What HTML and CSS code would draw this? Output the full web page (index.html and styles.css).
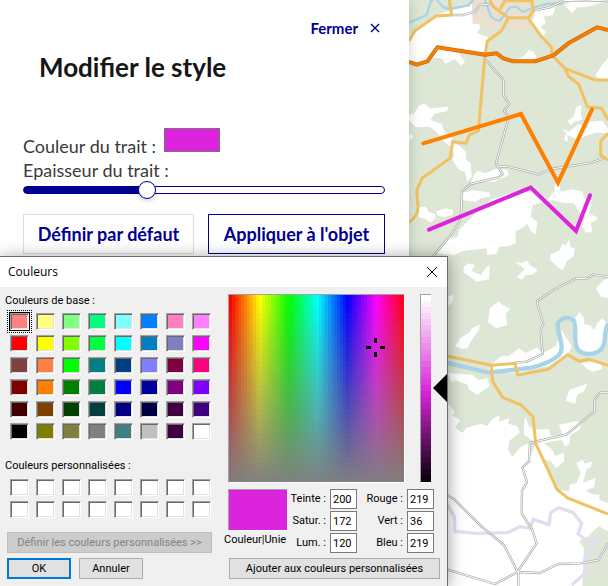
FILE: index.html
```html
<!DOCTYPE html>
<html lang="fr">
<head>
<meta charset="utf-8">
<title>Modifier le style</title>
<link rel="stylesheet" href="styles.css">
</head>
<body>
<main class="app">
  <section class="panel">
    <button class="close-link" type="button">Fermer
      <svg class="close-icon" viewBox="0 0 10 10" aria-hidden="true"><path d="M1 1L9 9M9 1L1 9"/></svg>
    </button>
    <h1 class="title">Modifier le style</h1>
    <div class="field">
      <label for="stroke-color">Couleur du trait :</label>
      <input class="color-box" id="stroke-color" type="color" value="#db24db">
    </div>
    <label class="range-label" for="stroke-width">Epaisseur du trait :</label>
    <input class="range" id="stroke-width" type="range" min="0" max="30" value="10">
    <div class="actions">
      <button class="action action-default" type="button">Définir par défaut</button>
      <button class="action action-apply" type="button">Appliquer à l'objet</button>
    </div>
  </section>

  <section class="map" aria-label="Carte">
    <svg class="map-drawing" viewBox="27 0 597 1758" preserveAspectRatio="xMinYMin slice">
      <rect class="forest" x="27" width="597" height="1758"/>
      <g class="clearing" transform="translate(27 0)">
        <path d="M0 108L20 88 82 46 125 30 188 12 223 40 198 62 215 78 205 100 237 112 231 158 173 150 85 142 57 182 23 195 0 188Z"/>
        <path d="M85 145L150 160 168 185 155 198 140 178 125 182 110 192 98 175 60 172Z"/>
        <path d="M355 60L375 35 440 18 432 45 405 50 410 70 395 80 410 95 405 108 395 105 385 85Z"/>
        <path d="M465 15L485 5 597 3 570 10 530 22 505 22 490 40 478 28Z"/>
        <path d="M323 178L345 168 360 150 374 155 382 170 375 185Z"/>
        <path d="M597 175L581 192 560 225 567 234 597 238Z"/>
        <path d="M0 345L15 340 30 318 45 310 64 325 118 320 115 333 75 342 65 360 98 372 108 400 125 405 130 425 155 440 170 455 172 480 185 490 188 530 175 545 168 515 150 510 130 480 136 465 125 440 100 420 85 398 62 380 20 382 0 360Z"/>
        <path d="M0 408L8 402 13 412 0 420Z"/>
        <path d="M503 320L518 316 515 345 522 358 495 365 485 376 475 362 493 350Z"/>
        <path d="M457 385L480 395 510 372 535 385 540 365 580 362 597 385 597 400 560 398 530 408 510 420 475 405 478 425 465 420 472 400Z"/>
        <path d="M195 525L205 512 230 520 265 505 295 510 300 525 255 545 215 545 185 550Z"/>
        <path d="M160 580L190 570 240 577 245 590 215 595 200 606 160 600Z"/>
        <path d="M245 600L300 580 365 565 400 596 415 600 435 575 440 550 452 555 455 575 490 568 520 575 525 595 548 600 545 620 540 640 568 655 545 670 550 695 530 698 520 680 528 650 510 635 495 610 460 608 430 600 370 615 365 650 385 665 380 704 365 692 355 672 330 690 320 690 320 730 300 738 270 740 262 762 235 765 232 745 165 752 135 765 80 760 108 732 120 715 145 712 150 690 200 640Z"/>
        <path d="M30 622L50 620 60 636 78 642 80 655 65 668 45 655 28 652Z"/>
        <path d="M82 634L112 625 132 630 130 645 105 652 84 646Z"/>
        <path d="M480 717L485 742 498 745 494 768 472 785 462 810 448 803 424 780 425 762 450 752 460 732 472 735Z"/>
        <path d="M318 785L335 789 355 782 362 795 386 810 370 824 350 825 338 840 323 830 348 808Z"/>
        <path d="M178 790L198 795 188 812 215 825 232 802 242 795 240 838 203 845 163 815 165 800Z"/>
        <path d="M585 840L597 835 597 895 575 890 560 865Z"/>
      </g>
      <g class="clearing" transform="translate(27 879)">
        <path d="M118 10L134 5 130 28 117 38Z"/>
        <path d="M270 25L278 33 304 48 290 62 295 95 262 106 237 88 243 45Z"/>
        <path d="M212 95L210 112 188 140 176 165 160 168 138 160 155 135 182 118 190 105Z"/>
        <path d="M240 222L275 190 300 188 330 166 350 180 385 163 398 182 440 160 452 130 458 110 468 130 488 160 480 178 420 218 330 240 240 240Z"/>
        <path d="M498 75L512 57 525 75 525 92 545 98 555 112 565 90 580 75 597 95 590 160 545 190 505 160Z"/>
        <path d="M518 210L560 205 578 215 578 228 552 236 530 225Z"/>
        <path d="M470 322L482 290 535 272 525 295 505 305 498 332Z"/>
        <path d="M117 240L190 245 208 262 235 255 242 280 205 305 180 290 175 275 140 262 128 268Z"/>
        <path d="M117 330L137 358 130 368 155 382 145 392 140 405 160 420 172 405 215 392 235 400 248 380 272 366 270 388 300 375 298 392 325 400 332 418 300 445 297 470 310 492 335 462 360 450 365 490 380 450 345 425 345 385 350 372 360 400 375 410 420 408 425 430 460 425 450 395 500 385 520 390 510 412 485 425 480 455 468 460 458 440 405 450 430 470 438 488 465 480 465 505 442 525 425 505 400 498 420 540 445 590 480 595 482 575 502 570 515 540 502 510 520 500 528 512 550 505 545 522 532 530 522 570 560 555 555 582 530 592 545 602 572 605 570 620 597 630 597 715 570 700 555 712 538 730 510 745 525 765 520 879 117 879Z"/>
      </g>
      <path class="town" d="M215 0L400 0 404 48 392 70 388 90 345 100 335 78 305 92 262 85 250 70 218 72Z"/>
      <g class="river">
        <path d="M27 68L80 45 92 5 98 0M110 0L130 22 150 27 205 16 220 0M255 0L272 48Q285 62 300 62L330 22 350 20 368 36 410 20 440 12 490 10" stroke-width="7"/>
        <path d="M140 1088L265 1118 390 1104Q445 1092 475 1067C505 1040 455 975 480 962Q500 945 522 962C535 1000 505 1065 570 1062Q610 1060 614 1020 615 990 624 970" stroke-width="13"/>
      </g>
      <path class="frontier" d="M140 1511L163 1550 165 1594 230 1600 322 1598 360 1580 390 1585 400 1558 447 1574 452 1538 476 1523 520 1538 545 1570 534 1602 560 1620 590 1620 565 1665 555 1675 555 1720 515 1755"/>
      <g class="lane">
        <path d="M155 45L190 45 225 35 240 15 275 12M400 32L450 22 490 2 560 0 624 3"/>
        <path d="M258 180L310 240 310 285 328 312 312 333 327 350 288 490 295 500 325 500 415 523 455 507 575 488 610 475"/>
        <path d="M290 495L308 522 295 532 212 552 186 574 184 630 180 662 155 702 90 780"/>
        <path d="M624 830L580 824 562 835 527 836 465 867 412 903 414 920 430 970 422 990 428 1062 380 1085 345 1088"/>
        <path d="M624 1178L600 1178 583 1200 583 1235 500 1303 390 1329 387 1384 367 1402 381 1447 366 1472 365 1540 397 1590 410 1630 355 1712 355 1758"/>
        <path d="M140 1484L160 1496 245 1580 312 1635 353 1716 420 1719 475 1692 540 1690 595 1680 624 1630M353 1716L285 1752 140 1708"/>
      </g>
      <g class="lane-core">
        <path d="M155 45L190 45 225 35 240 15 275 12M400 32L450 22 490 2 560 0 624 3"/>
        <path d="M258 180L310 240 310 285 328 312 312 333 327 350 288 490 295 500 325 500 415 523 455 507 575 488 610 475"/>
        <path d="M290 495L308 522 295 532 212 552 186 574 184 630 180 662 155 702 90 780"/>
        <path d="M624 830L580 824 562 835 527 836 465 867 412 903 414 920 430 970 422 990 428 1062 380 1085 345 1088"/>
        <path d="M624 1178L600 1178 583 1200 583 1235 500 1303 390 1329 387 1384 367 1402 381 1447 366 1472 365 1540 397 1590 410 1630 355 1712 355 1758"/>
        <path d="M140 1484L160 1496 245 1580 312 1635 353 1716 420 1719 475 1692 540 1690 595 1680 624 1630M353 1716L285 1752 140 1708"/>
      </g>
      <g class="road">
        <path d="M27 122L45 92 108 48 155 45 148 0M270 0L280 20 325 53 385 53 400 32 395 0M300 28L315 2 395 2"/>
        <path d="M325 53L305 92 262 123 255 165 235 393 208 405 198 430 158 425 150 475 66 535 50 572 54 620Q55 645 27 668"/>
        <path d="M383 53L422 107 455 142 455 165 495 205 585 240 624 240M495 205L505 228 537 254 562 320 605 325 624 360M624 400L602 424 602 465 624 480"/>
        <path d="M140 1068L275 1096 345 1090 353 1125 445 1108 503 1064 538 1084 568 1078 624 1096M273 1096L278 1145 308 1192 363 1215 399 1250 407 1330 471 1468 503 1494 624 1542"/>
      </g>
      <path class="highway-edge" d="M27 186L50 194 82 184 112 142 255 164 290 160 310 175 340 184 405 184 460 166 505 130 592 82 624 90"/>
      <path class="highway" d="M27 186L50 194 82 184 112 142 255 164 290 160 310 175 340 184 405 184 460 166 505 130 592 82 624 90"/>
      <path class="sketch sketch-orange" d="M70 430L363 342 474 548 576 328"/>
      <path class="sketch sketch-pink" d="M87 689L392 563 528 693 570 586"/>
    </svg>
  </section>
</main>

<section class="dialog" role="dialog" aria-labelledby="dialog-title">
  <header class="dialog-bar">
    <h2 class="dialog-title" id="dialog-title">Couleurs</h2>
    <button class="dialog-close" type="button" aria-label="Fermer">
      <svg viewBox="0 0 12 12" aria-hidden="true"><path d="M1 1L11 11M11 1L1 11"/></svg>
    </button>
  </header>
  <div class="dialog-body">
    <div class="swatch-side">
      <h3 class="caption">Couleurs de base :</h3>
      <div class="swatches" id="base-colors"></div>
      <h3 class="caption caption-custom">Couleurs personnalisées :</h3>
      <div class="swatches" id="custom-colors"></div>
      <button class="btn btn-define" type="button" disabled>Définir les couleurs personnalisées &gt;&gt;</button>
      <div class="confirm">
        <button class="btn btn-ok" type="button">OK</button>
        <button class="btn" type="button">Annuler</button>
      </div>
    </div>
    <div class="mix-side">
      <div class="pickers">
        <div class="spectrum">
          <canvas id="spectrum" width="175" height="187"></canvas>
          <svg class="cross" viewBox="0 0 19 19" aria-hidden="true"><path d="M0 8h5v3H0zM14 8h5v3h-5zM8 0h3v5H8zM8 14h3v5H8z"/></svg>
        </div>
        <div class="luminance"><canvas id="luminance" width="10" height="187"></canvas></div>
        <svg class="arrow" viewBox="0 0 14 28" aria-hidden="true"><path d="M0 14L14 0V28Z"/></svg>
      </div>
      <div class="values">
        <div class="preview">
          <div class="preview-color"></div>
          <span class="preview-label">Couleur|Unie</span>
        </div>
        <div class="numbers">
          <label for="hue">Teinte :</label><input id="hue" value="200">
          <label for="red">Rouge :</label><input id="red" value="219">
          <label for="sat">Satur. :</label><input id="sat" value="172">
          <label for="green">Vert :</label><input id="green" value="36">
          <label for="lum">Lum. :</label><input id="lum" value="120">
          <label for="blue">Bleu :</label><input id="blue" value="219">
        </div>
      </div>
      <button class="btn btn-add" type="button">Ajouter aux couleurs personnalisées</button>
    </div>
  </div>
</section>
<script src="script.js"></script>
</body>
</html>
```
FILE: styles.css
```css
* { box-sizing: border-box; }
body { margin: 0; background: #fff; font-family: Lato, sans-serif; }
button, input { font: inherit; margin: 0; }
h1, h2, h3 { margin: 0; }

.app { display: grid; grid-template-columns: 409fr 199fr; height: 100vh; min-height: 586px; overflow: hidden; }

.panel { display: flex; flex-direction: column; padding: 16px 24px 0 23px; color: #3a3a3a; font-size: 18px; line-height: 24px; position: relative; z-index: 1; box-shadow: 0 0 12px rgba(0, 0, 0, .2); background: #fff; }
.close-link { align-self: flex-end; display: flex; align-items: center; gap: 12px; padding: 0 5px 0 0; border: 0; background: none; color: #000091; font-size: 15px; font-weight: 700; line-height: 24px; }
.close-icon { width: 10px; height: 10px; fill: none; stroke: #000091; stroke-width: 1.4; }
.title { margin: 11px 0 0 16px; color: #161616; font-size: 26px; font-weight: 700; line-height: 32px; }
.field { display: flex; align-items: flex-end; gap: 8px; margin-top: 45px; height: 30px; }
.field label { line-height: 24px; }
.color-box { appearance: none; width: 56px; height: 24px; margin-bottom: 6px; padding: 0; border: 1px solid #767676; background: none; }
.color-box::-webkit-color-swatch-wrapper { padding: 0; }
.color-box::-webkit-color-swatch { border: 0; }
.range { appearance: none; width: 100%; height: 18px; margin-top: -1px; background: none; }
.range::-webkit-slider-runnable-track { height: 8px; border: 1px solid #000091; border-radius: 4px; background: linear-gradient(to right, #000091 34%, #fff 34%); }
.range::-webkit-slider-thumb { appearance: none; width: 18px; height: 18px; margin-top: -6px; border: 1px solid #000091; border-radius: 50%; background: #fff; box-shadow: 0 2px 4px rgba(0, 0, 18, .16); }
.actions { display: grid; grid-template-columns: 171fr 177fr; gap: 14px; margin-top: 15px; }
.action { height: 40px; padding: 0; border: 1px solid #ddd; background: #fff; color: #000091; font-weight: 700; white-space: nowrap; }
.action-apply { border-color: #000091; }

.map { overflow: hidden; }
.map-drawing { display: block; width: 100%; height: 100%; }
.forest { fill: #dee7d5; }
.clearing { fill: #fff; }
.town { fill: #e9e0d0; }
.river, .frontier, .lane, .lane-core, .road, .highway, .highway-edge, .sketch { fill: none; stroke-linejoin: round; }
.river { stroke: #a9d4e8; }
.frontier { stroke: #e0def0; stroke-width: 10; }
.lane { stroke: #aaa; stroke-width: 7; }
.lane-core { stroke: #fff; stroke-width: 3; }
.road { stroke: #f0c263; stroke-width: 9; }
.highway-edge { stroke: #d2640f; stroke-width: 12; }
.highway { stroke: #f58000; stroke-width: 8; }
.sketch { stroke-width: 12; stroke-linecap: round; stroke-linejoin: miter; }
.sketch-orange { stroke: #ff8000; }
.sketch-pink { stroke: #db24db; }

.dialog { position: absolute; z-index: 2; left: 0; top: 256px; bottom: 0; width: 448px; min-height: 330px; border: solid #6b6b6b; border-width: 1px 1px 0 0; background: #f0f0f0; box-shadow: 0 2px 16px rgba(0, 0, 0, .4); color: #000; font-family: Roboto, sans-serif; font-size: 11px; line-height: 14px; }
.dialog-bar { display: flex; align-items: center; justify-content: space-between; height: 30px; padding: 0 9px 0 8px; background: #fff; }
.dialog-title { font-family: "Open Sans", sans-serif; font-size: 12px; font-weight: 400; }
.dialog-close { display: flex; padding: 0; border: 0; background: none; }
.dialog-close svg { width: 12px; height: 12px; fill: none; stroke: #000; }
.dialog-body { display: grid; grid-template-columns: 205px 1fr; column-gap: 16px; padding: 7px 0 0 7px; }

.swatch-side { display: flex; flex-direction: column; }
.caption { margin-left: -2px; font-size: 11px; font-weight: 400; line-height: 14px; }
.caption-custom { margin-top: 19px; }
.swatches { display: grid; grid-template-columns: repeat(8, 19px); gap: 5px 7px; margin: 5px 0 0 3px; }
.caption-custom + .swatches { margin-top: 6px; }
.swatch { height: 17px; padding: 0; border: 1px solid; border-color: #a0a0a0 #fff #fff #a0a0a0; box-shadow: inset 1px 1px #696969, inset -1px -1px #e3e3e3; }
.swatch-selected { outline: 1px dotted #000; outline-offset: 2px; box-shadow: inset 1px 1px #696969, inset -1px -1px #e3e3e3, 0 0 0 1px #000; }
.btn { height: 21px; padding: 0; border: 1px solid #adadad; background: #e1e1e1; color: #000; line-height: 14px; white-space: nowrap; }
.btn-define { margin-top: 14px; border-color: #bfbfbf; background: #ccc; color: #838383; }
.confirm { display: grid; grid-template-columns: 64px 64px; gap: 8px; margin-top: 5px; }
.btn-ok { border: 2px solid #0078d7; }

.mix-side { display: flex; flex-direction: column; }
.pickers { display: flex; align-items: flex-start; }
.spectrum, .luminance { border: 1px solid; border-color: #a0a0a0 #fff #fff #a0a0a0; }
.spectrum { position: relative; }
.luminance { margin: 0 2px 0 15px; border-right: 0; }
.spectrum canvas, .luminance canvas { display: block; }
.cross { position: absolute; left: 137px; top: 43px; width: 19px; height: 19px; }
.arrow { width: 14px; height: 28px; margin-top: 80px; }
.values { display: flex; margin-top: 6px; }
.preview { display: flex; flex-direction: column; width: 60px; }
.preview-color { height: 42px; border: 1px solid; border-color: #a0a0a0 #fff #fff #a0a0a0; background: #db24db; }
.preview-label { margin: 2px 0 0 -4px; white-space: nowrap; }
.numbers { display: grid; grid-template-columns: 38px 27px 42px 27px; column-gap: 4px; row-gap: 2px; align-items: center; }
.numbers label { text-align: right; white-space: nowrap; }
.numbers input { width: 27px; height: 20px; padding: 0 0 0 2px; border: 1px solid #7a7a7a; background: #fff; }
.btn-add { width: 211px; margin: 5px 0 0 1px; }
```
FILE: script.js
```js
const baseColors = [
  '#ff8080', '#ffff80', '#80ff80', '#00ff80', '#80ffff', '#0080ff', '#ff80c0', '#ff80ff',
  '#ff0000', '#ffff00', '#80ff00', '#00ff40', '#00ffff', '#0080c0', '#8080c0', '#ff00ff',
  '#804040', '#ff8040', '#00ff00', '#008080', '#004080', '#8080ff', '#800040', '#ff0080',
  '#800000', '#ff8000', '#008000', '#008040', '#0000ff', '#0000a0', '#800080', '#8000ff',
  '#400000', '#804000', '#004000', '#004040', '#000080', '#000040', '#400040', '#400080',
  '#000000', '#808000', '#808040', '#808080', '#408080', '#c0c0c0', '#400040', '#ffffff'
];

function addSwatches(id, colors) {
  const holder = document.getElementById(id);
  colors.forEach((color) => {
    const swatch = document.createElement('button');
    swatch.type = 'button';
    swatch.className = 'swatch';
    swatch.style.backgroundColor = color;
    swatch.setAttribute('aria-label', color);
    holder.append(swatch);
  });
}

addSwatches('base-colors', baseColors);
addSwatches('custom-colors', Array(16).fill('#ffffff'));
document.querySelector('.swatch').classList.add('swatch-selected');

// Hue runs across, saturation falls from top to bottom.
const spectrum = document.getElementById('spectrum').getContext('2d');
for (let x = 0; x < 175; x += 3) {
  for (let y = 0; y < 187; y += 6) {
    spectrum.fillStyle = `hsl(${x / 175 * 360} ${100 - y / 186 * 100}% 50%)`;
    spectrum.fillRect(x, y, 3, 6);
  }
}

const luminance = document.getElementById('luminance').getContext('2d');
for (let y = 0; y < 187; y += 6) {
  luminance.fillStyle = `hsl(300 72% ${100 - y / 186 * 100}%)`;
  luminance.fillRect(0, y, 10, 6);
}
```
